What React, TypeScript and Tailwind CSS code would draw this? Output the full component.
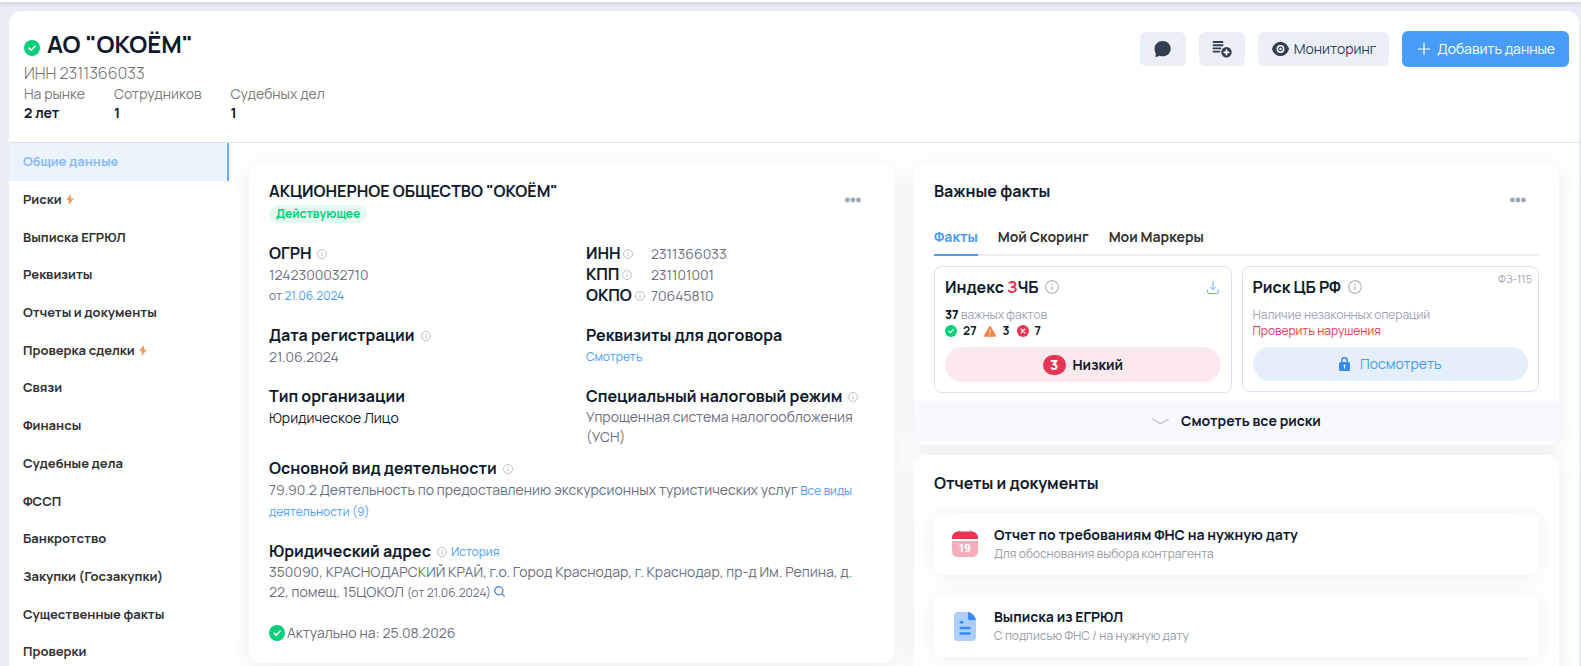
import React, { useState } from 'react';
import { clsx } from 'clsx';

const navItems = [
  { label: 'Общие данные' },
  { label: 'Риски', bolt: true },
  { label: 'Выписка ЕГРЮЛ' },
  { label: 'Реквизиты' },
  { label: 'Отчеты и документы' },
  { label: 'Проверка сделки', bolt: true },
  { label: 'Связи' },
  { label: 'Финансы' },
  { label: 'Судебные дела' },
  { label: 'ФССП' },
  { label: 'Банкротство' },
  { label: 'Закупки (Госзакупки)' },
  { label: 'Существенные факты' },
  { label: 'Проверки' },
];

const stats = [
  { label: 'На рынке', value: '2 лет' },
  { label: 'Сотрудников', value: '1' },
  { label: 'Судебных дел', value: '1' },
];

const codes = [
  { label: 'ИНН', value: '2311366033' },
  { label: 'КПП', value: '231101001' },
  { label: 'ОКПО', value: '70645810' },
];

const tabs = ['Факты', 'Мой Скоринг', 'Мои Маркеры'];

const cardClass = 'bg-white rounded-xl shadow-[0_4px_24px_rgba(30,50,60,0.09)]';

function CheckIcon({ className }: { className?: string }) {
  return (
    <svg viewBox="0 0 16 16" className={clsx('shrink-0', className)}>
      <circle cx="8" cy="8" r="8" fill="#03d079" />
      <path d="M5 8.2l2.1 2L11 6.2" fill="none" stroke="#fff" strokeWidth="1.6" strokeLinecap="round" strokeLinejoin="round" />
    </svg>
  );
}

function InfoIcon({ className = 'w-2.5 h-2.5' }: { className?: string }) {
  return (
    <svg viewBox="0 0 14 14" className={clsx('shrink-0', className)} fill="none" stroke="#b9b9bb">
      <circle cx="7" cy="7" r="6.3" strokeWidth="1.2" />
      <path d="M7 6.2v4" strokeWidth="1.4" />
      <path d="M7 3.7v1.4" strokeWidth="1.4" />
    </svg>
  );
}

function BoltIcon() {
  return (
    <svg viewBox="0 0 8 11" className="w-2 h-[11px]" fill="#f09c57">
      <path d="M5 0L0 6.2h3L2.6 11 8 4.4H4.9z" />
    </svg>
  );
}

function DotsButton() {
  return (
    <button type="button" aria-label="Меню" className="p-1 mt-3 mr-[9px]">
      <svg viewBox="0 0 16 6" className="w-4 h-1.5" fill="#9ba6b7">
        <circle cx="2.5" cy="3" r="2.4" />
        <circle cx="8" cy="3" r="2.4" />
        <circle cx="13.5" cy="3" r="2.4" />
      </svg>
    </button>
  );
}

function Header() {
  return (
    <header className="flex items-start justify-between pl-[15px] pr-2.5 pt-5 h-[132px] border-b border-[#dfe1e4]">
      <div>
        <div className="flex items-center gap-[7px] h-[26px]">
          <CheckIcon className="w-4 h-4 mt-2" />
          <h1 className="text-2xl leading-[26px] font-bold text-[#0e1a2c]">АО "ОКОЁМ"</h1>
        </div>
        <div className="text-base leading-5 mt-1.5 font-light text-[#6e6e6e]">ИНН 2311366033</div>
        <dl className="flex gap-[29px] mt-px">
          {stats.map((s) => (
            <div key={s.label}>
              <dt className="text-sm leading-[19px] text-[#7a7a7a]">{s.label}</dt>
              <dd className="text-sm leading-[19px] font-bold text-[#0e1a2c]">{s.value}</dd>
            </div>
          ))}
        </dl>
      </div>
      <div className="flex items-center gap-[13px]">
        <button type="button" aria-label="Сообщения" className="w-[46px] h-[34px] rounded-md bg-[#ebf0f7] flex items-center justify-center">
          <svg viewBox="0 0 17 16" className="w-[17px] h-4" fill="#333f50">
            <path d="M8.700 0C13.200 0 16.700 3.400 16.700 7.700S13.200 15.300 8.700 15.300c-1.200 0-2.200-.2-3.200-.6-1.100.7-2.800 1.200-4.600 1 .8-1.100 1-2.200.9-3.200C1 11.200.5 9.600.5 7.700.5 3.400 4.200 0 8.700 0z" />
          </svg>
        </button>
        <button type="button" aria-label="Добавить в список" className="w-[46px] h-[34px] rounded-md bg-[#ebf0f7] flex items-center justify-center">
          <svg viewBox="0 0 20 18" className="w-5 h-[18px]" fill="none" stroke="#333f50" strokeLinecap="round">
            <path d="M1.500 2h9M1.500 5.200h9M1.500 8.400h7M1.500 11.600h6" strokeWidth="1.900" />
            <circle cx="14.500" cy="12.300" r="5.200" fill="#333f50" stroke="none" />
            <path d="M14.500 10.100v4.400M12.300 12.300h4.400" stroke="#fff" strokeWidth="1.800" />
          </svg>
        </button>
        <button type="button" className="h-[34px] rounded-md bg-[#ebf0f7] flex items-center gap-[5px] pl-3.5 pr-[13px] text-sm text-[#333f50]">
          <svg viewBox="0 0 17 14" className="w-[17px] h-3.5">
            <path d="M8.500 0C4.500 0 1.500 2.700.2 6.300a2 2 0 0 0 0 1.400C1.500 11.300 4.500 14 8.500 14s7-2.700 8.300-6.300a2 2 0 0 0 0-1.400C15.500 2.700 12.500 0 8.500 0z" fill="#333f50" />
            <circle cx="8.500" cy="7" r="3.200" fill="none" stroke="#fff" strokeWidth="1.500" />
            <circle cx="8.500" cy="7" r="1.200" fill="#fff" />
          </svg>
          Мониторинг
        </button>
        <button type="button" className="h-9 rounded-md bg-[#479df9] flex items-center gap-[7px] pl-4 pr-3.5 text-sm text-white">
          <svg viewBox="0 0 12 12" className="w-3 h-3" stroke="#fff" strokeWidth="1.200">
            <path d="M6 0v12M0 6h12" />
          </svg>
          Добавить данные
        </button>
      </div>
    </header>
  );
}

function Sidebar() {
  const [active, setActive] = useState('Общие данные');

  return (
    <nav className="w-[220px] shrink-0">
      <ul className="grid auto-rows-fr min-h-[528px]">
        {navItems.map((item) => (
          <li key={item.label} className="flex">
            <a
              href="#"
              onClick={() => setActive(item.label)}
              className={clsx(
                'flex-1 flex items-center gap-1 pl-3.5 text-[13px] font-bold border-r-2',
                active === item.label
                  ? 'bg-[#ebf3fc] border-[#6daaf8] text-[#89bbfb]'
                  : 'border-transparent text-[#303235]'
              )}
            >
              {item.label}
              {item.bolt && <BoltIcon />}
            </a>
          </li>
        ))}
      </ul>
    </nav>
  );
}

function FieldTitle({ children, info }: { children: React.ReactNode; info?: boolean }) {
  return (
    <h3 className="flex items-center gap-1.5 text-base leading-[21px] font-bold text-[#0e1a2c]">
      {children}
      {info && <InfoIcon />}
    </h3>
  );
}

function CompanyCard() {
  return (
    <section className={clsx(cardClass, 'px-5 pt-[18px] pb-5 text-sm leading-[21px] text-[#6b7080]')}>
      <div className="flex items-start justify-between">
        <div>
          <h2 className="text-base leading-5 font-bold text-[#0e1a2c]">АКЦИОНЕРНОЕ ОБЩЕСТВО "ОКОЁМ"</h2>
          <span className="block w-fit mt-1 px-[7px] h-[18px] rounded-full bg-[#e4f9f0] text-xs leading-[18px] font-bold text-[#03d079]">
            Действующее
          </span>
        </div>
        <DotsButton />
      </div>

      <div className="grid grid-cols-[11fr_10fr] gap-y-[19px] mt-5">
        <div>
          <FieldTitle info>ОГРН</FieldTitle>
          <p>1242300032710</p>
          <p className="text-xs leading-[21px]">
            от <a href="#" className="text-[#479df9]">21.06.2024</a>
          </p>
        </div>
        <dl>
          {codes.map((c) => (
            <div key={c.label} className="flex">
              <dt className="w-[65px] flex items-center gap-[3px] text-base leading-[21px] font-bold text-[#0e1a2c]">
                {c.label}
                <InfoIcon />
              </dt>
              <dd>{c.value}</dd>
            </div>
          ))}
        </dl>
        <div>
          <FieldTitle info>Дата регистрации</FieldTitle>
          <p>21.06.2024</p>
        </div>
        <div>
          <FieldTitle>Реквизиты для договора</FieldTitle>
          <a href="#" className="block text-xs leading-[21px] text-[#479df9]">Смотреть</a>
        </div>
        <div>
          <FieldTitle>Тип организации</FieldTitle>
          <p className="text-[#0e1a2c]">Юридическое Лицо</p>
        </div>
        <div>
          <FieldTitle info>Специальный налоговый режим</FieldTitle>
          <p className="leading-5">Упрощенная система налогообложения (УСН)</p>
        </div>
      </div>

      <div className="mt-[11px] pr-2">
        <FieldTitle info>Основной вид деятельности</FieldTitle>
        <p>
          79.90.2 Деятельность по предоставлению экскурсионных туристических услуг{' '}
          <a href="#" className="text-xs leading-none text-[#479df9]">Все виды деятельности (9)</a>
        </p>
      </div>

      <div className="mt-5 pr-2">
        <div className="flex items-center gap-1">
          <FieldTitle info>Юридический адрес</FieldTitle>
          <a href="#" className="text-xs leading-[21px] text-[#479df9]">История</a>
        </div>
        <p className="leading-5">
          350090, КРАСНОДАРСКИЙ КРАЙ, г.о. Город Краснодар, г. Краснодар, пр-д Им. Репина, д. 22, помещ. 15ЦОКОЛ{' '}
          <span className="text-xs leading-none">(от 21.06.2024)</span>{' '}
          <svg viewBox="0 0 11 11" className="inline w-[11px] h-[11px] align-baseline" fill="none" stroke="#3b82cf" strokeWidth="1.200">
            <circle cx="4.800" cy="4.800" r="4.100" />
            <path d="M7.800 7.800l2.900 2.900" />
          </svg>
        </p>
      </div>

      <div className="flex items-center gap-0.5 mt-5">
        <CheckIcon className="w-4 h-4" />
        Актуально на: 25.08.2026
      </div>
    </section>
  );
}

function FactsCard() {
  const [tab, setTab] = useState(tabs[0]);

  return (
    <section className={clsx(cardClass, 'pt-[18px] pb-1')}>
      <div className="px-5">
        <div className="flex items-start justify-between h-11">
          <h2 className="text-base leading-5 font-bold text-[#0e1a2c]">Важные факты</h2>
          <DotsButton />
        </div>
        <div role="tablist" className="flex gap-5 h-[31px] border-b-2 border-[#ebecee]">
          {tabs.map((t) => (
            <button
              key={t}
              type="button"
              role="tab"
              aria-selected={tab === t}
              onClick={() => setTab(t)}
              className={clsx(
                'h-[31px] pb-1.5 text-sm leading-[19px] font-bold border-b-2',
                tab === t ? 'border-[#479df9] text-[#479df9]' : 'border-transparent text-[#303235]'
              )}
            >
              {t}
            </button>
          ))}
        </div>

        <div className="grid grid-cols-2 items-start gap-2.5 mt-[10px]">
          <div className="border border-[#d9e3f0] rounded-lg p-2.5">
            <div className="flex items-center gap-1.5 h-5">
              <h3 className="text-base font-bold text-[#0e1a2c]">
                Индекс <span className="text-[#e93554]">З</span>ЧБ
              </h3>
              <InfoIcon className="w-3.5 h-3.5" />
              <button type="button" aria-label="Скачать" className="ml-auto mr-0.5">
                <svg viewBox="0 0 12 13" className="w-3 h-[13px]" fill="none" stroke="#64acf9" strokeLinecap="round" strokeLinejoin="round">
                  <path d="M6 .5v8M3.200 5.800L6 8.600l2.800-2.800M.6 9v2a1.500 1.500 0 0 0 1.500 1.500h7.800A1.500 1.500 0 0 0 11.400 11V9" />
                </svg>
              </button>
            </div>
            <p className="mt-[10px] text-xs leading-4 text-[#9ca3b6]">
              <b className="font-extrabold text-[#0e1a2c]">37</b> важных фактов
            </p>
            <div className="flex items-center h-4 text-xs font-bold text-[#0e1a2c]">
              <CheckIcon className="w-3 h-3" />
              <span className="ml-1.5 mr-[7px]">27</span>
              <svg viewBox="0 0 12 11" className="w-3 h-[11px]">
                <path d="M5.200.5a1 1 0 0 1 1.600 0l5 8.800a1 1 0 0 1-.9 1.500H1.100a1 1 0 0 1-.9-1.500z" fill="#fb7f3e" />
                <path d="M6 3.800v3.100M6 8.300v1.200" stroke="#fff" strokeWidth="1.100" />
              </svg>
              <span className="ml-[7px] mr-[7px]">3</span>
              <svg viewBox="0 0 12 12" className="w-3 h-3">
                <circle cx="6" cy="6" r="6" fill="#e93554" />
                <path d="M4.300 4.300l3.400 3.400M7.700 4.300L4.300 7.700" stroke="#fff" strokeWidth="1.300" strokeLinecap="round" />
              </svg>
              <span className="ml-1.5">7</span>
            </div>
            <button type="button" className="flex items-center justify-center gap-[7px] w-full h-[35px] mt-2 rounded-full bg-[#fbe9ed] text-sm font-bold text-[#0e1a2c]">
              <span className="w-[23px] h-5 rounded-full bg-[#e93554] text-white leading-5 text-center font-extrabold">3</span>
              Низкий
            </button>
          </div>

          <div className="relative border border-[#d9e3f0] rounded-lg p-2.5">
            <span className="absolute top-1 right-1.5 text-[11px] leading-4 text-[#9ca3b6]">ФЗ-115</span>
            <div className="flex items-center gap-[7px] h-5">
              <h3 className="text-base font-bold text-[#0e1a2c]">Риск ЦБ РФ</h3>
              <InfoIcon className="w-3.5 h-3.5" />
            </div>
            <p className="mt-[10px] text-xs leading-4 text-[#9ca3b6]">Наличие незаконных операций</p>
            <a href="#" className="block text-xs leading-4 text-[#e93554]">Проверить нарушения</a>
            <button type="button" className="flex items-center justify-center gap-2.5 w-full h-[34px] mt-2 rounded-full bg-[#e5effa] text-sm text-[#479df9]">
              <svg viewBox="0 0 11 14" className="w-[11px] h-3.5">
                <path d="M2.800 6V3.500a2.700 2.700 0 0 1 5.400 0V6" fill="none" stroke="#388af4" strokeWidth="1.500" />
                <rect y="5" width="11" height="9" rx="1.500" fill="#388af4" />
                <circle cx="5.500" cy="8.500" r="1" fill="#fff" />
                <path d="M5.500 8.500v3" stroke="#fff" strokeWidth="1" />
              </svg>
              Посмотреть
            </button>
          </div>
        </div>
      </div>

      <button type="button" className="flex items-center justify-center gap-3 w-full h-10 mt-2 bg-[#f8f9fd] text-sm font-bold text-[#0e1a2c]">
        <svg viewBox="0 0 17 7" className="w-[17px] h-[7px]" fill="none" stroke="#c6c9cf" strokeWidth="1.500">
          <path d="M.3 .8L8.500 5.700 16.700 .8" />
        </svg>
        Смотреть все риски
      </button>
    </section>
  );
}

function CalendarIcon() {
  return (
    <svg viewBox="0 0 26 28" className="w-[26px] h-7">
      <path d="M7.500 0a1.200 1.200 0 0 1 1.200 1.200v2H6.300v-2A1.200 1.200 0 0 1 7.500 0zM18.500 0a1.200 1.200 0 0 1 1.200 1.200v2h-2.400v-2A1.200 1.200 0 0 1 18.500 0z" fill="#f6aebc" />
      <path d="M6 1.500h14a6 6 0 0 1 6 6V9H0V7.500a6 6 0 0 1 6-6z" fill="#e93554" />
      <path d="M0 11h26v11a5 5 0 0 1-5 5H5a5 5 0 0 1-5-5z" fill="#f6aebc" />
      <text x="13" y="22" textAnchor="middle" fontSize="11" fontWeight="800" fill="#fff">19</text>
    </svg>
  );
}

function DocumentIcon() {
  return (
    <svg viewBox="0 0 26 29" className="w-[26px] h-[29px]">
      <path d="M6 0h10v5a4 4 0 0 0 4 4h4v16a4 4 0 0 1-4 4H6a4 4 0 0 1-4-4V4a4 4 0 0 1 4-4z" fill="#afcffb" />
      <path d="M16 0c4 .6 7.500 4 8 8.600h-6a2 2 0 0 1-2-2z" fill="#388af4" />
      <path d="M8.700 10.300h1.600M8.700 16h8.800M8.700 21.500h8.800" stroke="#388af4" strokeWidth="2.600" strokeLinecap="round" />
    </svg>
  );
}

const reports = [
  { icon: <CalendarIcon />, title: 'Отчет по требованиям ФНС на нужную дату', text: 'Для обоснования выбора контрагента' },
  { icon: <DocumentIcon />, title: 'Выписка из ЕГРЮЛ', text: 'С подписью ФНС / на нужную дату' },
];

function ReportsCard() {
  return (
    <section className={clsx(cardClass, 'px-5 pt-[18px] pb-5')}>
      <h2 className="text-base leading-5 font-bold text-[#0e1a2c]">Отчеты и документы</h2>
      <div className="flex flex-col gap-5 mt-5">
        {reports.map((r) => (
          <a
            key={r.title}
            href="#"
            className="flex items-center gap-4 h-[62px] pl-[18px] rounded-lg bg-white shadow-[0_2px_20px_rgba(30,50,60,0.08)]"
          >
            {r.icon}
            <span>
              <span className="block text-sm leading-[18px] font-bold text-[#0e1a2c]">{r.title}</span>
              <span className="block text-xs leading-[19px] text-[#979ca5]">{r.text}</span>
            </span>
          </a>
        ))}
      </div>
    </section>
  );
}

export default function App() {
  return (
    <div className="h-screen overflow-hidden bg-[#e8edf5] font-['Manrope','Inter',sans-serif]">
      <div className="h-0.5 bg-white shadow-[0_1px_5px_rgba(40,60,70,0.3)]" />
      <main className="ml-[9px] mr-0.5 mt-[9px] bg-white rounded-t-xl">
        <Header />
        <div className="flex">
          <Sidebar />
          <div className="flex-1 min-w-0 grid grid-cols-2 items-start gap-5 px-5 pt-5 pb-5">
            <CompanyCard />
            <div className="flex flex-col gap-2.5">
              <FactsCard />
              <ReportsCard />
            </div>
          </div>
        </div>
      </main>
    </div>
  );
}
